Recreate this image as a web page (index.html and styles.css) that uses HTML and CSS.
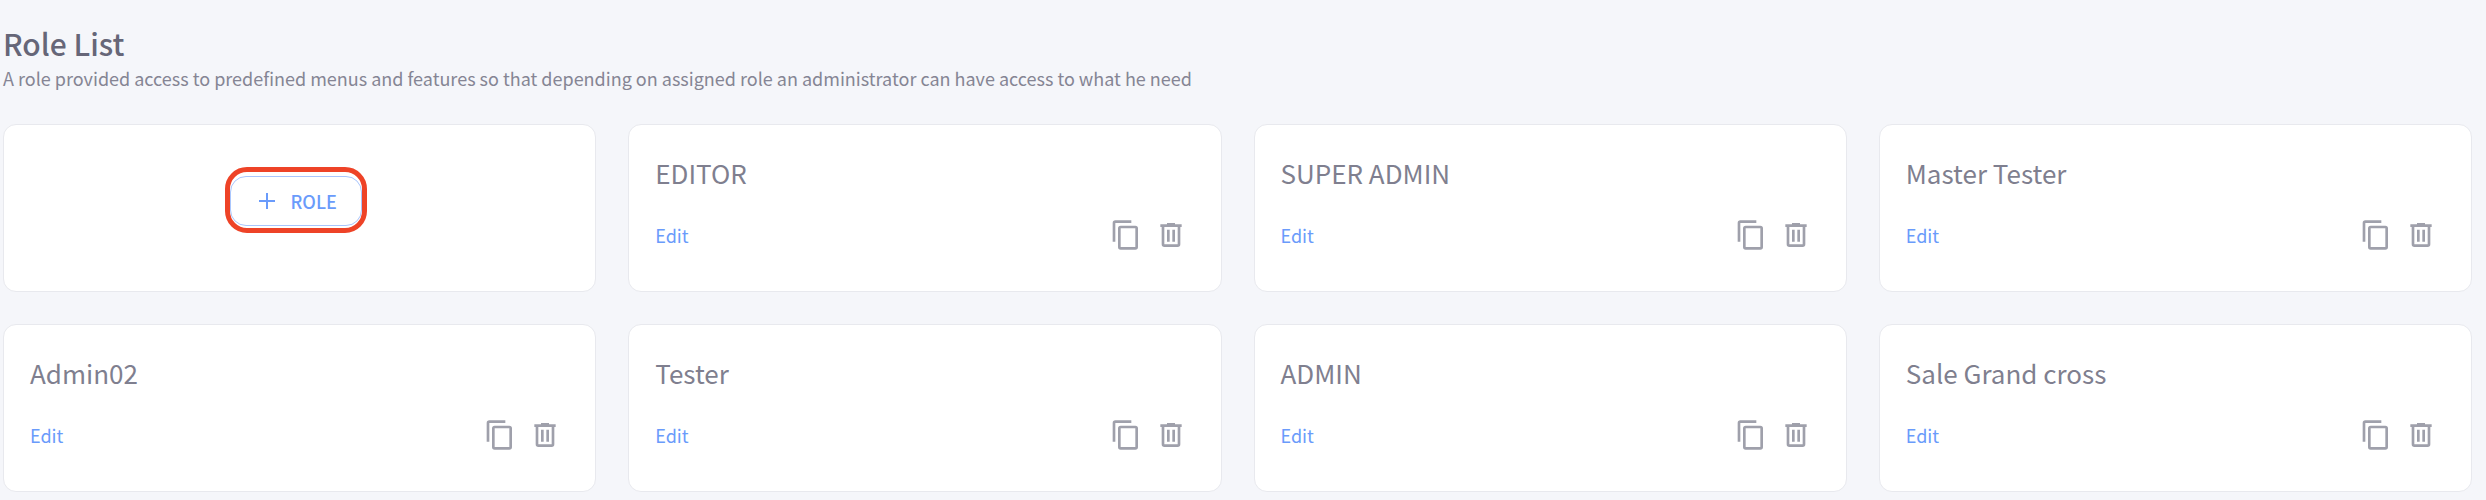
FILE: index.html
```html
<!DOCTYPE html>
<html lang="en">
<head>
    <meta charset="UTF-8">
    <meta name="viewport" content="width=device-width, initial-scale=1.0">
    <title>Role List</title>
    <link rel="stylesheet" href="styles.css">
</head>
<body>
    <!-- shared icons -->
    <svg class="sprite" aria-hidden="true">
        <symbol id="icon-plus" viewBox="0 0 24 24">
            <path d="M20,13H13V20H11V13H4V11H11V4H13V11H20V13Z"/>
        </symbol>
        <symbol id="icon-copy" viewBox="0 0 24 24">
            <path d="M19,21H8V7H19M19,5H8A2,2 0 0,0 6,7V21A2,2 0 0,0 8,23H19A2,2 0 0,0 21,21V7A2,2 0 0,0 19,5M16,1H4A2,2 0 0,0 2,3V17H4V3H16V1Z"/>
        </symbol>
        <symbol id="icon-trash" viewBox="0 0 24 24">
            <path d="M9,3V4H4V6H5V19A2,2 0 0,0 7,21H17A2,2 0 0,0 19,19V6H20V4H15V3H9M7,6H17V19H7V6M9,8V17H11V8H9M13,8V17H15V8H13Z"/>
        </symbol>
    </svg>

    <header class="page-header">
        <h1>Role List</h1>
        <p>A role provided access to predefined menus and features so that depending on assigned role an administrator can have access to what he need</p>
    </header>

    <main class="roles">
        <section class="card card-add">
            <div class="highlight">
                <button class="add-role" type="button">
                    <svg><use href="#icon-plus"/></svg>
                    ROLE
                </button>
            </div>
        </section>
        <section class="card">
            <h2>EDITOR</h2>
            <div class="card-footer">
                <a href="#">Edit</a>
                <div class="actions">
                    <button type="button" aria-label="Copy"><svg><use href="#icon-copy"/></svg></button>
                    <button type="button" aria-label="Delete"><svg><use href="#icon-trash"/></svg></button>
                </div>
            </div>
        </section>
        <section class="card">
            <h2>SUPER ADMIN</h2>
            <div class="card-footer">
                <a href="#">Edit</a>
                <div class="actions">
                    <button type="button" aria-label="Copy"><svg><use href="#icon-copy"/></svg></button>
                    <button type="button" aria-label="Delete"><svg><use href="#icon-trash"/></svg></button>
                </div>
            </div>
        </section>
        <section class="card">
            <h2>Master Tester</h2>
            <div class="card-footer">
                <a href="#">Edit</a>
                <div class="actions">
                    <button type="button" aria-label="Copy"><svg><use href="#icon-copy"/></svg></button>
                    <button type="button" aria-label="Delete"><svg><use href="#icon-trash"/></svg></button>
                </div>
            </div>
        </section>
        <section class="card">
            <h2>Admin02</h2>
            <div class="card-footer">
                <a href="#">Edit</a>
                <div class="actions">
                    <button type="button" aria-label="Copy"><svg><use href="#icon-copy"/></svg></button>
                    <button type="button" aria-label="Delete"><svg><use href="#icon-trash"/></svg></button>
                </div>
            </div>
        </section>
        <section class="card">
            <h2>Tester</h2>
            <div class="card-footer">
                <a href="#">Edit</a>
                <div class="actions">
                    <button type="button" aria-label="Copy"><svg><use href="#icon-copy"/></svg></button>
                    <button type="button" aria-label="Delete"><svg><use href="#icon-trash"/></svg></button>
                </div>
            </div>
        </section>
        <section class="card">
            <h2>ADMIN</h2>
            <div class="card-footer">
                <a href="#">Edit</a>
                <div class="actions">
                    <button type="button" aria-label="Copy"><svg><use href="#icon-copy"/></svg></button>
                    <button type="button" aria-label="Delete"><svg><use href="#icon-trash"/></svg></button>
                </div>
            </div>
        </section>
        <section class="card">
            <h2>Sale Grand cross</h2>
            <div class="card-footer">
                <a href="#">Edit</a>
                <div class="actions">
                    <button type="button" aria-label="Copy"><svg><use href="#icon-copy"/></svg></button>
                    <button type="button" aria-label="Delete"><svg><use href="#icon-trash"/></svg></button>
                </div>
            </div>
        </section>
    </main>
</body>
</html>
```
FILE: styles.css
```css
* {
    box-sizing: border-box;
}

body {
    margin: 0;
    padding: 22px 14px 0 3px;
    background: #f5f6fa;
    color: #858594;
    font-family: "Noto Sans CJK SC", "Noto Sans", sans-serif;
    font-size: 18px;
}

h1,
h2,
p {
    margin: 0;
    font-weight: 400;
}

svg {
    display: block;
    width: 32px;
    height: 32px;
    fill: currentColor;
}

button {
    border: 0;
    padding: 0;
    background: none;
    color: inherit;
    font: inherit;
    cursor: pointer;
}

.sprite {
    display: none;
}

.page-header {
    margin-bottom: 32px;
}

.page-header h1 {
    color: #666678;
    font-size: 30px;
    font-weight: 500;
    line-height: 42px;
}

.page-header p {
    line-height: 28px;
}

.roles {
    display: grid;
    grid-template-columns: repeat(4, 1fr);
    gap: 32px;
}

.card {
    padding: 30px 34px 40px 26px;
    border: 1px solid #e8e9ee;
    border-radius: 13px;
    background: #fff;
}

.card h2 {
    color: #7f7f8f;
    font-size: 26px;
    line-height: 36px;
}

.card-footer {
    display: flex;
    align-items: center;
    justify-content: space-between;
    margin-top: 28px;
}

.card-footer a {
    color: #6a9bfb;
    text-decoration: none;
}

.actions {
    display: flex;
    gap: 13px;
    color: #9fa0ab;
}

.card-add {
    display: flex;
    align-items: flex-start;
    justify-content: center;
    padding-top: 42px;
}

/* red ring that draws attention to the add button */
.highlight {
    border: 5px solid #ee4327;
    border-radius: 22px;
    padding: 4px 0 2px;
}

.add-role {
    display: flex;
    align-items: center;
    gap: 12px;
    height: 50px;
    padding: 0 24px;
    border: 1px solid #a9c6fd;
    border-radius: 16px;
    color: #6a9bfb;
    font-weight: 500;
}

.add-role svg {
    width: 24px;
    height: 24px;
}
```
